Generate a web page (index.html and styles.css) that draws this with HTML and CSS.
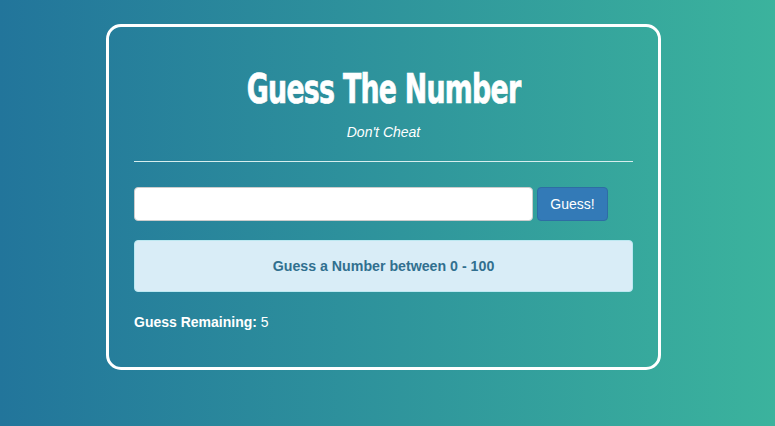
FILE: index.html
```html
<!DOCTYPE html>
<html>
<head>
<meta charset="utf-8">
<link rel="stylesheet" href="styles.css">
</head>
<body>
<div class="card">
  <h1 class="title"><span class="title-text">Guess The Number</span></h1>
  <p class="subtitle">Don't Cheat</p>
  <hr class="rule">
  <div class="form-row">
    <input class="guess-input" type="text">
    <button class="guess-btn">Guess!</button>
  </div>
  <div class="alert">Guess a Number between 0 - 100</div>
  <p class="remaining"><b>Guess Remaining:</b> 5</p>
</div>
</body>
</html>
```

FILE: styles.css
```css
html, body {
  margin: 0;
  height: 100%;
}
body {
  background: linear-gradient(to right, #22759b, #3bb39d);
  font-family: "Liberation Sans", Arial, sans-serif;
  font-size: 14px;
  color: #fff;
  padding-top: 24px;
  box-sizing: border-box;
}
.card {
  box-sizing: border-box;
  width: 555px;
  height: 346px;
  margin-left: 106px;
  border: 3px solid #fff;
  border-radius: 15px;
  padding: 42px 25px 0;
}
.title {
  margin: 0;
  text-align: center;
  font-family: "DejaVu Sans Condensed", "DejaVu Sans", sans-serif;
  font-stretch: condensed;
  font-weight: bold;
  font-size: 40px;
  line-height: 40px;
}
.title-text {
  display: inline-block;
  transform: scaleX(0.745);
  letter-spacing: -1px;
  -webkit-text-stroke: 0.7px #fff;
}
.subtitle {
  margin: 13px 0 0;
  text-align: center;
  font-style: italic;
  line-height: 20px;
}
.rule {
  margin: 19px 0 0;
  border: 0;
  border-top: 1px solid #d6eeee;
}
.form-row {
  display: flex;
  gap: 4px;
  margin-top: 25px;
}
.guess-input {
  box-sizing: border-box;
  width: 399px;
  height: 34px;
  border: 1px solid #ccc;
  border-radius: 4px;
  background: #fff;
  margin: 0;
}
.guess-btn {
  box-sizing: border-box;
  height: 34px;
  width: 71px;
  background: #337ab7;
  border: 1px solid #2e6da4;
  border-radius: 4px;
  color: #fff;
  font-family: "Liberation Sans", Arial, sans-serif;
  font-size: 14px;
  padding: 0;
  margin: 0;
}
.alert {
  margin-top: 19px;
  height: 52px;
  box-sizing: border-box;
  background: #d9edf7;
  border: 1px solid #bce8f1;
  border-radius: 4px;
  color: #31708f;
  font-weight: bold;
  font-size: 14.2px;
  display: flex;
  align-items: center;
  justify-content: center;
}
.remaining {
  margin: 20px 0 0;
  line-height: 20px;
}
```
